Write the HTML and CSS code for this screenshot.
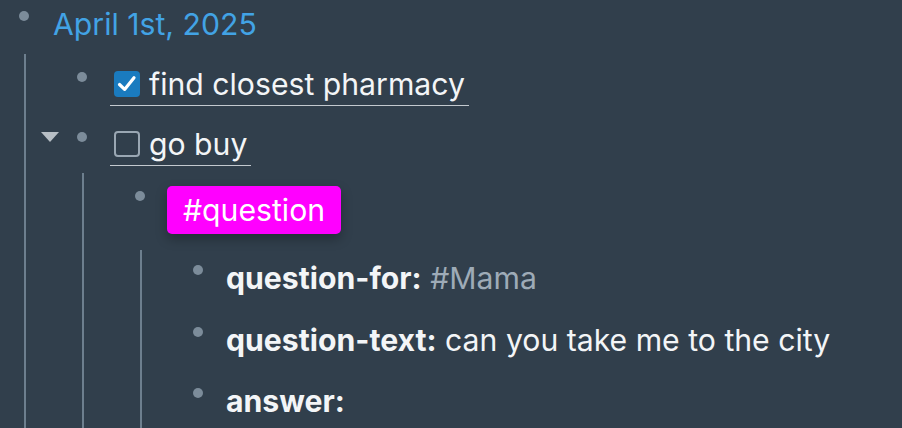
FILE: index.html
```html
<!DOCTYPE html>
<html lang="en">
<head>
<meta charset="utf-8">
<title>April 1st, 2025</title>
<link rel="stylesheet" href="styles.css">
</head>
<body>
<div class="page">
  <div class="block">
    <div class="row row-title">
      <span class="bullet"><span class="dot"></span></span>
      <div class="content title">April 1st, 2025</div>
    </div>
    <div class="children lvl1">
      <div class="block">
        <div class="row row-task">
          <span class="bullet"><span class="dot"></span></span>
          <div class="content editing"><span class="checkbox checked"><svg viewBox="0 0 26 26" width="26" height="26"><path d="M5.5 13.5 L10.6 18.4 L20 6.8" fill="none" stroke="#ffffff" stroke-width="3.2" stroke-linecap="round" stroke-linejoin="round"/></svg></span><span class="text">find closest pharmacy</span></div>
        </div>
      </div>
      <div class="block">
        <div class="row row-task row-gap">
          <span class="toggle"><svg viewBox="0 0 18 10" width="18" height="10"><polygon points="0,0 18,0 9,10" fill="#b7bec5"/></svg></span>
          <span class="bullet"><span class="dot"></span></span>
          <div class="content editing"><span class="checkbox"></span><span class="text">go buy</span></div>
        </div>
        <div class="children lvl2">
          <div class="block">
            <div class="row row-tag">
              <span class="bullet"><span class="dot"></span></span>
              <div class="content"><span class="tag">#question</span></div>
            </div>
            <div class="children lvl3">
              <div class="row row-prop">
                <span class="bullet"><span class="dot"></span></span>
                <div class="content"><span class="key">question-for:</span> <span class="ref">#Mama</span></div>
              </div>
              <div class="row row-prop">
                <span class="bullet"><span class="dot"></span></span>
                <div class="content"><span class="key">question-text:</span> can you take me to the city</div>
              </div>
              <div class="row row-prop">
                <span class="bullet"><span class="dot"></span></span>
                <div class="content"><span class="key">answer:</span></div>
              </div>
            </div>
          </div>
        </div>
      </div>
    </div>
  </div>
</div>
</body>
</html>
```

FILE: styles.css
```css
html, body {
  margin: 0;
  padding: 0;
  overflow: hidden;
  background: #313f4c;
}

body {
  font-family: Inter, "Noto Sans", sans-serif;
  font-size: 30.2px;
  color: #f3f5f7;
  width: 902px;
  height: 428px;
}

.page {
  padding: 4px 0 0 10px;
}

.row {
  display: flex;
  align-items: flex-start;
}

.bullet {
  flex: none;
  width: 28px;
  height: 24px;
  display: flex;
  align-items: center;
  justify-content: center;
}

.dot {
  width: 10px;
  height: 10px;
  border-radius: 50%;
  background: #7c8c9a;
}

.toggle {
  flex: none;
  width: 20px;
  height: 24px;
  margin-left: -28px;
  margin-right: 8px;
  display: flex;
  align-items: center;
  justify-content: center;
}

.content {
  margin-left: 14px;
  line-height: 40px;
  white-space: nowrap;
}

.title {
  color: #42a3e5;
  padding-left: 1px;
}

.row-task .bullet,
.row-task .toggle {
  margin-top: 3px;
}

.editing {
  padding: 2px 4px 1px;
  border-bottom: 1px solid #c3c9cf;
}

.checkbox {
  display: inline-block;
  box-sizing: border-box;
  width: 26px;
  height: 26px;
  border: 2px solid #9aa7b3;
  border-radius: 4px;
  vertical-align: middle;
  margin: -5px 9px 0 0;
}

.checkbox.checked {
  border: none;
  background: #1a7bbf;
}

.checkbox svg {
  display: block;
}

.children {
  margin-left: 14px;
  border-left: 2px solid #6d7f8e;
  padding: 8px 0 30px 42px;
}

.lvl1 {
  margin-top: 10px;
}

.row-gap {
  margin-top: 16px;
}

.lvl2 {
  margin-top: 7px;
  padding-top: 11px;
}

.tag {
  display: inline-block;
  margin: 2px 0 0 -1px;
  padding: 4px 16px;
  line-height: 40px;
  background: #ff00ff;
  color: #ffffff;
  border-radius: 5px;
  box-shadow: 0 5px 12px rgba(0, 0, 0, 0.28);
}

.lvl3 {
  margin-top: 16px;
  padding-top: 8px;
}

.row-prop + .row-prop {
  margin-top: 21.5px;
}

.key {
  font-weight: 700;
}

.ref {
  color: #9eabb7;
}
```
